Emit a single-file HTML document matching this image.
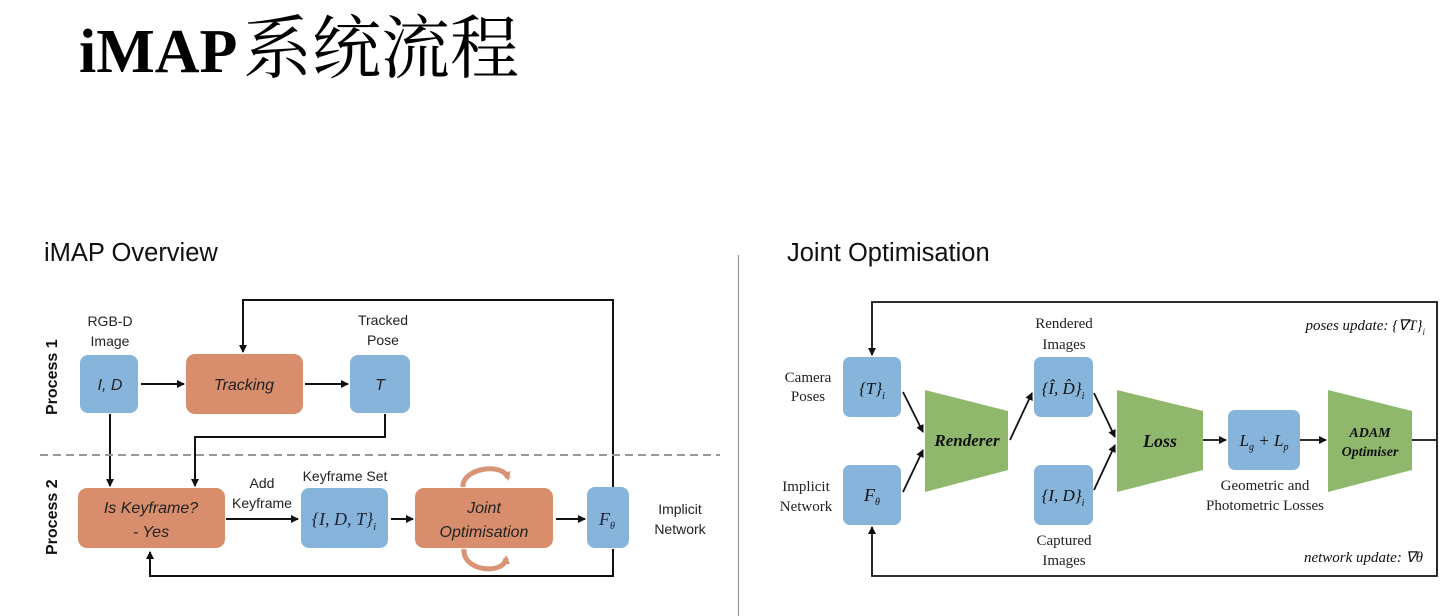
<!DOCTYPE html>
<html><head><meta charset="utf-8"><style>
html,body{margin:0;padding:0;background:#fff;width:1455px;height:616px;overflow:hidden}
svg{display:block}
.s{font-family:"Liberation Sans","DejaVu Sans",sans-serif}
.r{font-family:"Liberation Serif",serif}
</style></head><body>
<svg width="1455" height="616" viewBox="0 0 1455 616" xmlns="http://www.w3.org/2000/svg">
<defs>
<marker id="a" markerWidth="8" markerHeight="8" refX="7" refY="4" orient="auto" markerUnits="userSpaceOnUse"><path d="M0,0 L8,4 L0,8 z" fill="#111"/></marker>
<marker id="o" markerWidth="9" markerHeight="9" refX="6" refY="4.5" orient="auto" markerUnits="userSpaceOnUse"><path d="M0,0 L9,4.5 L0,9 z" fill="#d99478"/></marker>
</defs>
<!-- title -->
<text x="79" y="72" font-size="62" font-weight="bold" fill="#000" style="font-family:'Liberation Serif',serif">iMAP</text>
<text x="243" y="72" font-size="69" fill="#000" style="font-family:'Noto Serif CJK SC','Noto Sans CJK SC',serif">系统流程</text>
<text x="44" y="261" font-size="25.5" class="s" fill="#111">iMAP Overview</text>
<text x="787" y="261" font-size="25.5" class="s" fill="#111">Joint Optimisation</text>
<line x1="738.5" y1="255" x2="738.5" y2="616" stroke="#999" stroke-width="1.2"/>

<!-- left diagram -->
<g stroke="#111" stroke-width="2" fill="none">
<polyline points="613,488 613,300 243,300 243,352" marker-end="url(#a)"/>
<line x1="141" y1="384" x2="184" y2="384" marker-end="url(#a)"/>
<line x1="305" y1="384" x2="348" y2="384" marker-end="url(#a)"/>
<line x1="110" y1="414" x2="110" y2="486" marker-end="url(#a)"/>
<polyline points="385,414 385,437 195,437 195,486" marker-end="url(#a)"/>
<line x1="226" y1="519" x2="298" y2="519" marker-end="url(#a)"/>
<line x1="391" y1="519" x2="413" y2="519" marker-end="url(#a)"/>
<line x1="556" y1="519" x2="585" y2="519" marker-end="url(#a)"/>
<polyline points="613,549 613,576 150,576 150,552" marker-end="url(#a)"/>
</g>
<line x1="40" y1="455" x2="720" y2="455" stroke="#999" stroke-width="2" stroke-dasharray="8,5"/>
<g fill="#86b4da">
<rect x="80" y="355" width="58" height="58" rx="8"/>
<rect x="350" y="355" width="60" height="58" rx="8"/>
<rect x="301" y="488" width="87" height="60" rx="8"/>
<rect x="587" y="487" width="42" height="61" rx="8"/>
</g>
<g fill="#d88d6c">
<rect x="186" y="354" width="117" height="60" rx="9"/>
<rect x="78" y="488" width="147" height="60" rx="9"/>
<rect x="415" y="488" width="138" height="60" rx="9"/>
</g>
<g stroke="#d99478" stroke-width="5" fill="none">
<path d="M463,487 C462,468 503,462 508,478" marker-end="url(#o)"/>
<path d="M464,549 C462,572 505,575 506,558" marker-end="url(#o)"/>
</g>
<g class="s" font-size="14" fill="#222" text-anchor="middle">
<text x="110" y="326">RGB-D</text><text x="110" y="346">Image</text>
<text x="383" y="325">Tracked</text><text x="383" y="345">Pose</text>
<text x="262" y="488">Add</text><text x="262" y="508">Keyframe</text>
<text x="345" y="481">Keyframe Set</text>
<text x="680" y="514">Implicit</text><text x="680" y="534">Network</text>
</g>
<g class="s" font-size="16" font-style="italic" fill="#222" text-anchor="middle">
<text x="110" y="390">I, D</text>
<text x="244" y="390">Tracking</text>
<text x="380" y="390">T</text>
<text x="151" y="513">Is Keyframe?</text><text x="151" y="537">- Yes</text>
<text x="484" y="513">Joint</text><text x="484" y="537">Optimisation</text>
</g>
<g class="r" font-style="italic" fill="#223" text-anchor="middle">
<text x="344" y="525" font-size="18">{I, D, T}<tspan font-size="11" dy="5">i</tspan></text>
<text x="607" y="525" font-size="18">F<tspan font-size="10" dy="4">θ</tspan></text>
</g>
<g class="s" font-size="16" font-weight="bold" fill="#111">
<text transform="translate(57,415) rotate(-90)">Process 1</text>
<text transform="translate(57,555) rotate(-90)">Process 2</text>
</g>

<!-- right diagram -->
<g stroke="#111" stroke-width="1.8" fill="none">
<polyline points="1437,440 1437,302 872,302 872,355" marker-end="url(#a)"/>
<polyline points="1437,440 1437,576 872,576 872,527" marker-end="url(#a)"/>
<line x1="1412" y1="440" x2="1437" y2="440"/>
<line x1="903" y1="392" x2="923" y2="432" marker-end="url(#a)"/>
<line x1="903" y1="492" x2="923" y2="450" marker-end="url(#a)"/>
<line x1="1010" y1="440" x2="1032" y2="393" marker-end="url(#a)"/>
<line x1="1094" y1="393" x2="1115" y2="437" marker-end="url(#a)"/>
<line x1="1094" y1="490" x2="1115" y2="445" marker-end="url(#a)"/>
<line x1="1203" y1="440" x2="1226" y2="440" marker-end="url(#a)"/>
<line x1="1300" y1="440" x2="1326" y2="440" marker-end="url(#a)"/>
</g>
<g fill="#86b4da">
<rect x="843" y="357" width="58" height="60" rx="7"/>
<rect x="843" y="465" width="58" height="60" rx="7"/>
<rect x="1034" y="357" width="59" height="60" rx="7"/>
<rect x="1034" y="465" width="59" height="60" rx="7"/>
<rect x="1228" y="410" width="72" height="60" rx="7"/>
</g>
<g fill="#8fb86d">
<polygon points="925,390 1008,411 1008,470 925,492"/>
<polygon points="1117,390 1203,411 1203,470 1117,492"/>
<polygon points="1328,390 1412,411 1412,470 1328,492"/>
</g>
<g class="r" font-size="15" fill="#222" text-anchor="middle">
<text x="808" y="382">Camera</text><text x="808" y="401">Poses</text>
<text x="806" y="491">Implicit</text><text x="806" y="511">Network</text>
<text x="1064" y="328">Rendered</text><text x="1064" y="349">Images</text>
<text x="1064" y="545">Captured</text><text x="1064" y="565">Images</text>
<text x="1265" y="490">Geometric and</text><text x="1265" y="510">Photometric Losses</text>
</g>
<g class="r" font-style="italic" fill="#111">
<text x="872" y="394" font-size="17" text-anchor="middle">{T}<tspan font-size="10" dy="5">i</tspan></text>
<text x="872" y="501" font-size="18" text-anchor="middle">F<tspan font-size="10" dy="4">θ</tspan></text>
<text x="1063" y="394" font-size="17" text-anchor="middle">{Î, D̂}<tspan font-size="10" dy="5">i</tspan></text>
<text x="1063" y="501" font-size="17" text-anchor="middle">{I, D}<tspan font-size="10" dy="5">i</tspan></text>
<text x="1264" y="446" font-size="17" text-anchor="middle">L<tspan font-size="10" dy="4">g</tspan><tspan dy="-4"> + L</tspan><tspan font-size="10" dy="4">p</tspan></text>
<text x="1425" y="330" font-size="15" text-anchor="end">poses update: {∇T}<tspan font-size="9" dy="5">i</tspan></text>
<text x="1423" y="562" font-size="15" text-anchor="end">network update: ∇θ</text>
</g>
<g class="r" font-style="italic" font-weight="bold" fill="#111" text-anchor="middle">
<text x="967" y="446" font-size="17">Renderer</text>
<text x="1160" y="447" font-size="18">Loss</text>
<text x="1370" y="437" font-size="14">ADAM</text>
<text x="1370" y="456" font-size="14">Optimiser</text>
</g>
</svg>
</body></html>
